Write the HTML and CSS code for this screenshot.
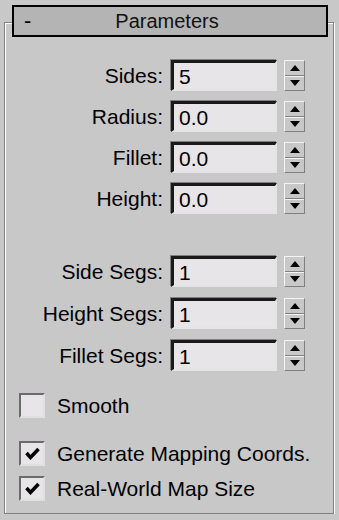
FILE: index.html
```html
<!DOCTYPE html>
<html lang="en">
<head>
    <meta charset="UTF-8">
    <title>Parameters</title>
    <link rel="stylesheet" href="styles.css">
</head>
<body>
    <div class="rollout">
        <div class="rollout-title">
            <span class="collapse">-</span>
            <span class="title-text">Parameters</span>
        </div>

        <div class="group">
            <div class="row">
                <label class="label">Sides:</label>
                <div class="field">5</div>
                <div class="spinner"><span class="up"></span><span class="down"></span></div>
            </div>
            <div class="row">
                <label class="label">Radius:</label>
                <div class="field">0.0</div>
                <div class="spinner"><span class="up"></span><span class="down"></span></div>
            </div>
            <div class="row">
                <label class="label">Fillet:</label>
                <div class="field">0.0</div>
                <div class="spinner"><span class="up"></span><span class="down"></span></div>
            </div>
            <div class="row">
                <label class="label">Height:</label>
                <div class="field">0.0</div>
                <div class="spinner"><span class="up"></span><span class="down"></span></div>
            </div>
        </div>

        <div class="group segs">
            <div class="row">
                <label class="label">Side Segs:</label>
                <div class="field">1</div>
                <div class="spinner"><span class="up"></span><span class="down"></span></div>
            </div>
            <div class="row">
                <label class="label">Height Segs:</label>
                <div class="field">1</div>
                <div class="spinner"><span class="up"></span><span class="down"></span></div>
            </div>
            <div class="row">
                <label class="label">Fillet Segs:</label>
                <div class="field">1</div>
                <div class="spinner"><span class="up"></span><span class="down"></span></div>
            </div>
        </div>

        <div class="checks">
            <div class="check smooth">
                <span class="box"></span>
                <span>Smooth</span>
            </div>
            <div class="check mapping">
                <span class="box checked">
                    <svg width="15" height="13" viewBox="0 0 15 13"><path d="M1.5 6 L5.5 10.5 L13.5 2" fill="none" stroke="#000" stroke-width="3.5"/></svg>
                </span>
                <span>Generate Mapping Coords.</span>
            </div>
            <div class="check realworld">
                <span class="box checked">
                    <svg width="15" height="13" viewBox="0 0 15 13"><path d="M1.5 6 L5.5 10.5 L13.5 2" fill="none" stroke="#000" stroke-width="3.5"/></svg>
                </span>
                <span>Real-World Map Size</span>
            </div>
        </div>
    </div>
</body>
</html>
```

FILE: styles.css
```css
body {
    margin: 0;
    background-color: #c8c8c8;
    font-family: 'Liberation Sans', Arial, sans-serif;
    font-size: 21px;
    color: #000;
}
.rollout {
    margin: 22px 5px 0 4px;
    height: 490px;
    border: 1px solid #808080;
    box-shadow: 1px 1px 0 #fff, inset 1px 1px 0 #fff;
}
.rollout-title {
    margin: -18px 5px 0 7px;
    height: 28px;
    border: 2px solid #000;
    background-color: #b4b4b4;
    display: flex;
    align-items: center;
    font-size: 20px;
}
.collapse {
    width: 28px;
    padding-left: 10px;
    font-size: 22px;
    line-height: 1;
}
.title-text {
    flex: 1;
    text-align: center;
    margin-right: 38px;
    margin-left: -6px;
    color: #111;
}
.group {
    margin-top: 23px;
}
.group.segs {
    margin-top: 42px;
}
.row {
    display: flex;
    align-items: center;
    height: 31px;
    margin-bottom: 10px;
}
.segs .row {
    margin-bottom: 11px;
}
.label {
    width: 158px;
    text-align: right;
    margin-right: 8px;
}
.field {
    width: 96px;
    height: 26px;
    padding-left: 5px;
    line-height: 27px;
    background-color: #e8e5e8;
    border-top: 3px solid #1a1a1a;
    border-left: 3px solid #1a1a1a;
    border-right: 2px solid #e4e4e4;
    border-bottom: 2px solid #e4e4e4;
    box-shadow: -1px -1px 0 #808080;
}
.spinner {
    margin-left: 7px;
    width: 21px;
    height: 31px;
    display: flex;
    flex-direction: column;
    border-top: 1px solid #f4f4f4;
    border-left: 1px solid #f4f4f4;
    border-right: 1px solid #808080;
    border-bottom: 1px solid #808080;
    box-sizing: border-box;
}
.spinner span {
    flex: 1;
    display: flex;
    align-items: center;
    justify-content: center;
}
.spinner .up {
    border-bottom: 1px solid #808080;
    box-shadow: 0 1px 0 #f4f4f4;
}
.spinner .up::after {
    content: '';
    border-left: 5px solid transparent;
    border-right: 5px solid transparent;
    border-bottom: 6px solid #000;
}
.spinner .down::after {
    content: '';
    border-left: 5px solid transparent;
    border-right: 5px solid transparent;
    border-top: 6px solid #000;
}
.checks {
    margin-top: 22px;
}
.check {
    display: flex;
    align-items: center;
    height: 25px;
    padding-left: 14px;
}
.check.mapping {
    margin-top: 23px;
}
.check.realworld {
    margin-top: 10px;
}
.box {
    width: 22px;
    height: 21px;
    margin-right: 12px;
    background-color: #e8e5e8;
    border-top: 2px solid #6a6a6a;
    border-left: 2px solid #6a6a6a;
    border-right: 2px solid #e0e0e0;
    border-bottom: 2px solid #e0e0e0;
    display: flex;
    align-items: center;
    justify-content: center;
}
```
